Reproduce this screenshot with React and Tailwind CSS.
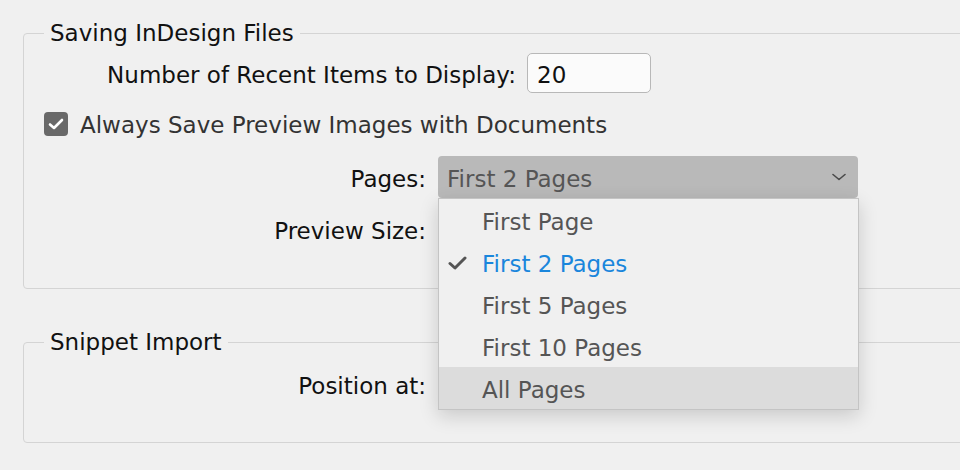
import React from "react";

const font = { fontFamily: '"DejaVu Sans", "Liberation Sans", sans-serif' };

function Chevron() {
  return (
    <svg width="14" height="8" viewBox="0 0 14 8" fill="none">
      <path d="M1 1.5 L7 6.5 L13 1.5" stroke="#4a4a4a" strokeWidth="1.6" strokeLinecap="round" strokeLinejoin="round" />
    </svg>
  );
}

function Tick({ color = "#555" }) {
  return (
    <svg width="19" height="14" viewBox="0 0 19 14" fill="none">
      <path d="M2 7.5 L7 12 L17 2" stroke={color} strokeWidth="3" strokeLinecap="round" strokeLinejoin="round" />
    </svg>
  );
}

const items = ["First Page", "First 2 Pages", "First 5 Pages", "First 10 Pages", "All Pages"];

export default function App() {
  return (
    <div
      className="relative w-[960px] h-[470px] overflow-hidden bg-[#f0f0f0] pl-[23px] pt-[19px] text-[23px] text-[#111]"
      style={font}
    >
      <fieldset className="w-[1000px] h-[270px] border border-[#d4d4d4] rounded-[4px]">
        <legend className="ml-[20px] px-[6px] leading-[28px] text-[#111]">Saving InDesign Files</legend>

        <div className="mt-[6px] flex items-center">
          <div className="w-[492px] text-right leading-[28px] pt-[3px]">Number of Recent Items to Display:</div>
          <div className="ml-[11px] w-[124px] h-[40px] bg-[#fbfbfb] border border-[#b8b8b8] rounded-[5px] flex items-center pl-[9px] pt-[3px] leading-[28px]">
            20
          </div>
        </div>

        <div className="mt-[11px] h-[40px] flex items-center pl-[20px]">
          <div className="w-[24px] h-[24px] rounded-[4px] bg-[#696969] flex items-center justify-center">
            <svg width="16" height="12" viewBox="0 0 16 12" fill="none">
              <path d="M2 6.5 L6 10 L14 2" stroke="#fff" strokeWidth="2.6" strokeLinecap="round" strokeLinejoin="round" />
            </svg>
          </div>
          <div className="ml-[12px] text-[#333] leading-[28px] pt-[2px]">Always Save Preview Images with Documents</div>
        </div>

        <div className="mt-[12px] h-[42px] flex items-center">
          <div className="w-[402px] text-right leading-[28px] pt-[3px]">Pages:</div>
          <div className="ml-[12px] w-[420px] h-[42px] bg-[#b9b9b9] rounded-[4px] flex items-center justify-between pl-[9px] pr-[12px] text-[#555]">
            <span className="leading-[28px] pt-[3px]">First 2 Pages</span>
            <Chevron />
          </div>
        </div>

        <div className="mt-[11px] h-[42px] flex items-center">
          <div className="w-[402px] text-right leading-[28px] pt-[2px]">Preview Size:</div>
          <div className="ml-[12px] w-[420px] h-[42px] bg-[#b9b9b9] rounded-[4px]" />
        </div>
      </fieldset>

      <fieldset className="mt-[39px] w-[1000px] h-[115px] border border-[#d4d4d4] rounded-[4px]">
        <legend className="ml-[20px] px-[6px] leading-[28px] text-[#111]">Snippet Import</legend>
        <div className="mt-[8px] h-[42px] flex items-center">
          <div className="w-[402px] text-right leading-[28px] pt-[2px]">Position at:</div>
          <div className="ml-[12px] w-[420px] h-[42px] bg-[#b9b9b9] rounded-[4px]" />
        </div>
      </fieldset>

      {/* open popup list for the Pages menu */}
      <div className="absolute left-[438px] top-[198px] w-[421px] bg-[#f0f0f0] border border-[#c4c4c4] shadow-[0_6px_18px_rgba(0,0,0,0.16)]">
        {items.map((label, i) => {
          const selected = i === 1;
          const hovered = i === 4;
          return (
            <div
              key={label}
              className={
                "h-[42px] flex items-center " + (hovered ? "bg-[#dcdcdc]" : "")
              }
            >
              <div className="w-[43px] flex justify-end pr-[15px] pt-[1px]">
                {selected ? <Tick /> : null}
              </div>
              <span className={"leading-[28px] pt-[3px] " + (selected ? "text-[#1a86dc]" : "text-[#555]")}>{label}</span>
            </div>
          );
        })}
      </div>
    </div>
  );
}
